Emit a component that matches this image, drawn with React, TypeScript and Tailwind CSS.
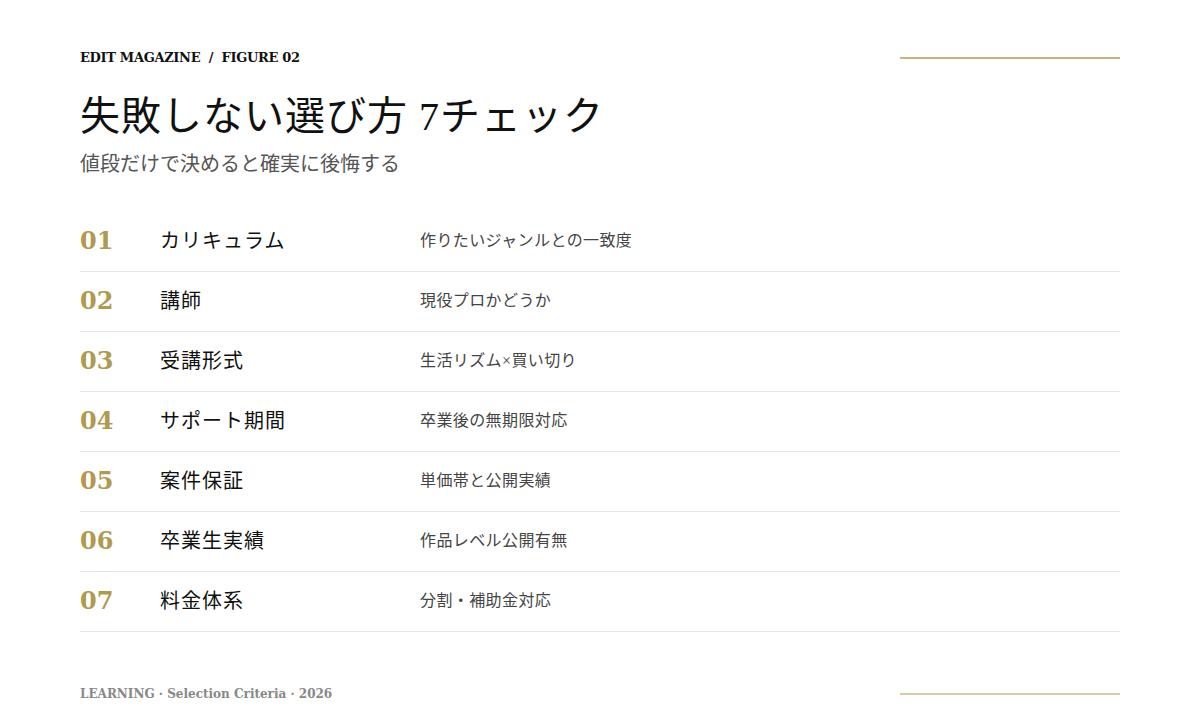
const rows = [
  ["01", "カリキュラム", "作りたいジャンルとの一致度"],
  ["02", "講師", "現役プロかどうか"],
  ["03", "受講形式", "生活リズム×買い切り"],
  ["04", "サポート期間", "卒業後の無期限対応"],
  ["05", "案件保証", "単価帯と公開実績"],
  ["06", "卒業生実績", "作品レベル公開有無"],
  ["07", "料金体系", "分割・補助金対応"],
];

const serif = { fontFamily: '"Liberation Serif", "DejaVu Serif", "Noto Sans CJK JP", serif' };
const dejavu = { fontFamily: '"DejaVu Serif", "Noto Sans CJK JP", serif' };

export default function App() {
  return (
    <div className="w-[1200px] h-[720px] bg-white flex flex-col px-20 pt-[48px] pb-[17px]" style={serif}>
      <div className="flex items-center justify-between">
        <div className="text-[13px] font-bold text-[#111] tracking-tight" style={dejavu}>EDIT MAGAZINE&nbsp;&nbsp;/&nbsp;&nbsp;FIGURE 02</div>
        <div className="w-[220px] h-[2px] bg-[#c8b47a]" />
      </div>
      <h1 className="mt-[24px] text-[40px] leading-[50px] text-[#111] tracking-wide">失敗しない選び方 7チェック</h1>
      <p className="mt-[8px] text-[20px] leading-[28px] text-[#555]">値段だけで決めると確実に後悔する</p>
      <div className="mt-[34px] flex flex-col">
        {rows.map(([n, l, d]) => (
          <div key={n} className="h-[60px] flex items-center border-b border-[#e5e5e5]">
            <div className="w-20 text-[24px] font-bold text-[#b09a50]" style={dejavu}>{n}</div>
            <div className="w-[260px] text-[20px] text-[#111] tracking-wider">{l}</div>
            <div className="text-[16px] text-[#444] tracking-wide">{d}</div>
          </div>
        ))}
      </div>
      <div className="mt-auto flex items-center justify-between">
        <div className="text-[12px] font-bold text-[#888]" style={dejavu}>LEARNING&nbsp;·&nbsp;Selection Criteria&nbsp;·&nbsp;2026</div>
        <div className="w-[220px] h-[2px] bg-[#d8cca6]" />
      </div>
    </div>
  );
}
